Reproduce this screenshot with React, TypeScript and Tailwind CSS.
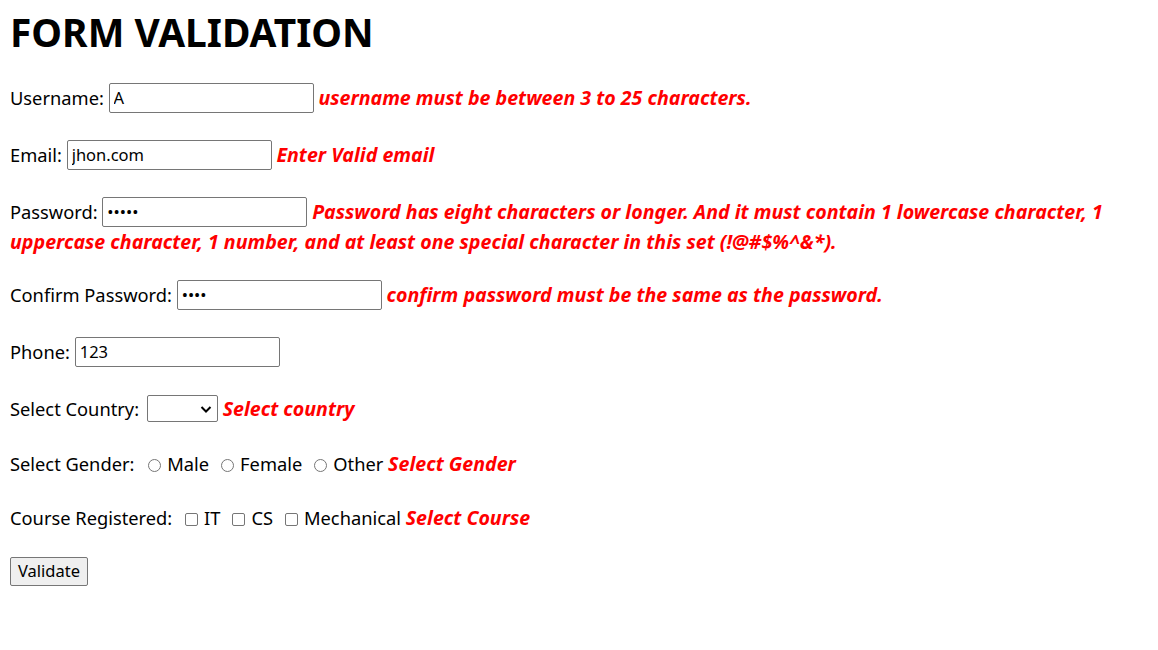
import React, { useState } from 'react';

const err = "font-bold italic text-[19.6px] leading-none text-[#ff0000]";
const field =
  "inline-block align-top h-[30px] w-[205px] border border-[#767676] rounded-[2px] bg-white px-[4px] text-[16.5px] text-black outline-none";
const radio =
  "appearance-none inline-block h-[13px] w-[13px] rounded-full border border-[#767676] bg-white align-[-1px]";
const check =
  "appearance-none inline-block h-[13px] w-[13px] rounded-[2px] border border-[#767676] bg-white align-[-1px]";

function App() {
  const [username, setUsername] = useState('A');
  const [email, setEmail] = useState('jhon.com');
  const [password, setPassword] = useState('12345');
  const [confirm, setConfirm] = useState('1234');
  const [phone, setPhone] = useState('123');
  const [country, setCountry] = useState('');

  return (
    <div className="min-h-screen bg-white px-[10px] font-['Noto_Sans',sans-serif] text-[18.3px] text-black">
      <h1 className="pt-[8px] text-[38.9px] font-bold leading-[48px]">FORM VALIDATION</h1>

      <form onSubmit={(e) => e.preventDefault()}>
        <div className="mt-[27px] leading-[30px]">
          Username:{' '}
          <input type="text" value={username} onChange={(e) => setUsername(e.target.value)} className={field} />{' '}
          <span className={err}>username must be between 3 to 25 characters.</span>
        </div>

        <div className="mt-[27px] leading-[30px]">
          Email:{' '}
          <input type="text" value={email} onChange={(e) => setEmail(e.target.value)} className={field} />{' '}
          <span className={err}>Enter Valid email</span>
        </div>

        <div className="mt-[27px] leading-[30px]">
          Password:{' '}
          <input type="password" value={password} onChange={(e) => setPassword(e.target.value)} className={field} />{' '}
          <span className={err}>
            Password has eight characters or longer. And it must contain 1 lowercase character, 1 uppercase
            character, 1 number, and at least one special character in this set (!@#$%^&amp;*).
          </span>
        </div>

        <div className="mt-[23px] leading-[30px]">
          Confirm Password:{' '}
          <input type="password" value={confirm} onChange={(e) => setConfirm(e.target.value)} className={field} />{' '}
          <span className={err}>confirm password must be the same as the password.</span>
        </div>

        <div className="mt-[27px] leading-[30px]">
          Phone:{' '}
          <input type="text" value={phone} onChange={(e) => setPhone(e.target.value)} className={field} />
        </div>

        <div className="mt-[27px] leading-[30px]">
          Select Country:{' '}
          <span className="relative ml-[3px] inline-block align-top pt-[1px]">
            <select
              value={country}
              onChange={(e) => setCountry(e.target.value)}
              className="block h-[27px] w-[71px] appearance-none rounded-[2px] border border-[#767676] bg-white text-[16px] outline-none"
            >
              <option value=""></option>
              <option value="in">India</option>
              <option value="us">USA</option>
            </select>
            <svg
              className="pointer-events-none absolute right-[6px] top-[11px]"
              width="12"
              height="9"
              viewBox="0 0 12 9"
              fill="none"
              stroke="#000"
              strokeWidth="2"
            >
              <path d="M1.5 2 L6 6.5 L10.5 2" />
            </svg>
          </span>{' '}
          <span className={err}>Select country</span>
        </div>

        <div className="mt-[25px] leading-[30px]">
          Select Gender:{' '}
          {['Male', 'Female', 'Other'].map((g, i) => (
            <label key={g}>
              <input type="radio" name="gender" className={`${radio} ${i === 0 ? 'ml-[9px]' : 'ml-[12px]'} mr-[6px]`} />
              {g}
            </label>
          ))}{' '}
          <span className={err}>Select Gender</span>
        </div>

        <div className="mt-[24px] leading-[30px]">
          Course Registered:{' '}
          {['IT', 'CS', 'Mechanical'].map((c, i) => (
            <label key={c}>
              <input type="checkbox" className={`${check} ${i === 0 ? 'ml-[8px]' : 'ml-[12px]'} mr-[6px]`} />
              {c}
            </label>
          ))}{' '}
          <span className={err}>Select Course</span>
        </div>

        <div className="mt-[23px]">
          <button
            type="submit"
            className="h-[29px] rounded-[2px] border border-[#767676] bg-[#efefef] px-[7px] text-[16.5px] leading-none text-black"
          >
            Validate
          </button>
        </div>
      </form>
    </div>
  );
}

export default App;
